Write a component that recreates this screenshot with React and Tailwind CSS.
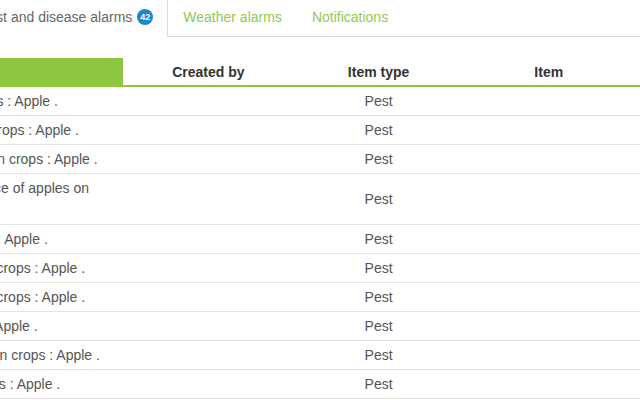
import React from 'react'

const GREEN = 'bg-[#8dc63f]'

const rows = [
  { text: 'Aphids detected in your crops : Apple .', type: 'Pest' },
  { text: 'Codling moth found in your crops : Apple .', type: 'Pest' },
  { text: 'Apple scab infections found in crops : Apple .', type: 'Pest' },
  { text: 'Risk of damage on the surface of apples on trees : Apple .', type: 'Pest' },
  { text: 'Spider mites found on crops : Apple .', type: 'Pest' },
  { text: 'Codling moth larvae seen in crops : Apple .', type: 'Pest' },
  { text: 'Apple scab spores found on crops : Apple .', type: 'Pest' },
  { text: 'Fire blight spotted in crops : Apple .', type: 'Pest' },
  { text: 'Brown rot infection detected in crops : Apple .', type: 'Pest' },
  { text: 'San Jose scale found in crops : Apple .', type: 'Pest' },
  { text: 'Woolly aphid found in crops : Apple .', type: 'Pest' },
]

const Tabs = () => (
  <div className="flex items-start border-b border-[#dcdcdc] -ml-[37px] h-[37px]">
    <div className="flex items-center h-[37px] -mb-px pb-[3px] bg-white border-l border-r border-[#dcdcdc] pl-[15px] pr-[14px] text-[#666]">
      <span>Pest and disease alarms</span>
      <span className="ml-[5px] flex items-center justify-center w-4 h-4 rounded-full bg-[#1a87d4] text-white text-[9px] font-bold leading-none">
        42
      </span>
    </div>
    <div className="flex items-center h-9 pb-[2px] px-[15px] text-[#93c852]">Weather alarms</div>
    <div className="flex items-center h-9 pb-[2px] px-[15px] text-[#93c852]">Notifications</div>
  </div>
)

const AlarmTable = () => (
  <div className="-ml-[189px] mt-[21px]">
    <table className="table-fixed border-collapse w-[973px]">
      <colgroup>
        <col className="w-[312px]" />
        <col className="w-[170px]" />
        <col className="w-[170px]" />
        <col className="w-[170px]" />
        <col className="w-[150px]" />
      </colgroup>
      <thead>
        <tr className="border-b-2 border-[#8dc63f] text-[#333] font-bold">
          <th className={`h-[28px] pt-[2px] ${GREEN} text-white font-bold`}>Alarm</th>
          <th className="h-[28px] pt-[2px] font-bold">Created by</th>
          <th className="h-[28px] pt-[2px] font-bold">Item type</th>
          <th className="h-[28px] pt-[2px] font-bold">Item</th>
          <th className="h-[28px] pt-[2px] font-bold">Date</th>
        </tr>
      </thead>
      <tbody className="text-[#555]">
        {rows.map((r, i) => (
          <tr key={i} className="border-b border-[#e3e3e3]">
            <td className="px-2 py-[3px] leading-[22px] text-left">{r.text}</td>
            <td className="px-2 py-[3px] leading-[22px] text-center"></td>
            <td className="px-2 py-[3px] leading-[22px] text-center">{r.type}</td>
            <td className="px-2 py-[3px] leading-[22px] text-center"></td>
            <td className="px-2 py-[3px] leading-[22px] text-center">12/06/2017</td>
          </tr>
        ))}
      </tbody>
    </table>
  </div>
)

export default function App() {
  return (
    <div className="w-[640px] h-[400px] overflow-hidden bg-white text-[14px] font-['Liberation_Sans',Arial,sans-serif]">
      <Tabs />
      <AlarmTable />
    </div>
  )
}
